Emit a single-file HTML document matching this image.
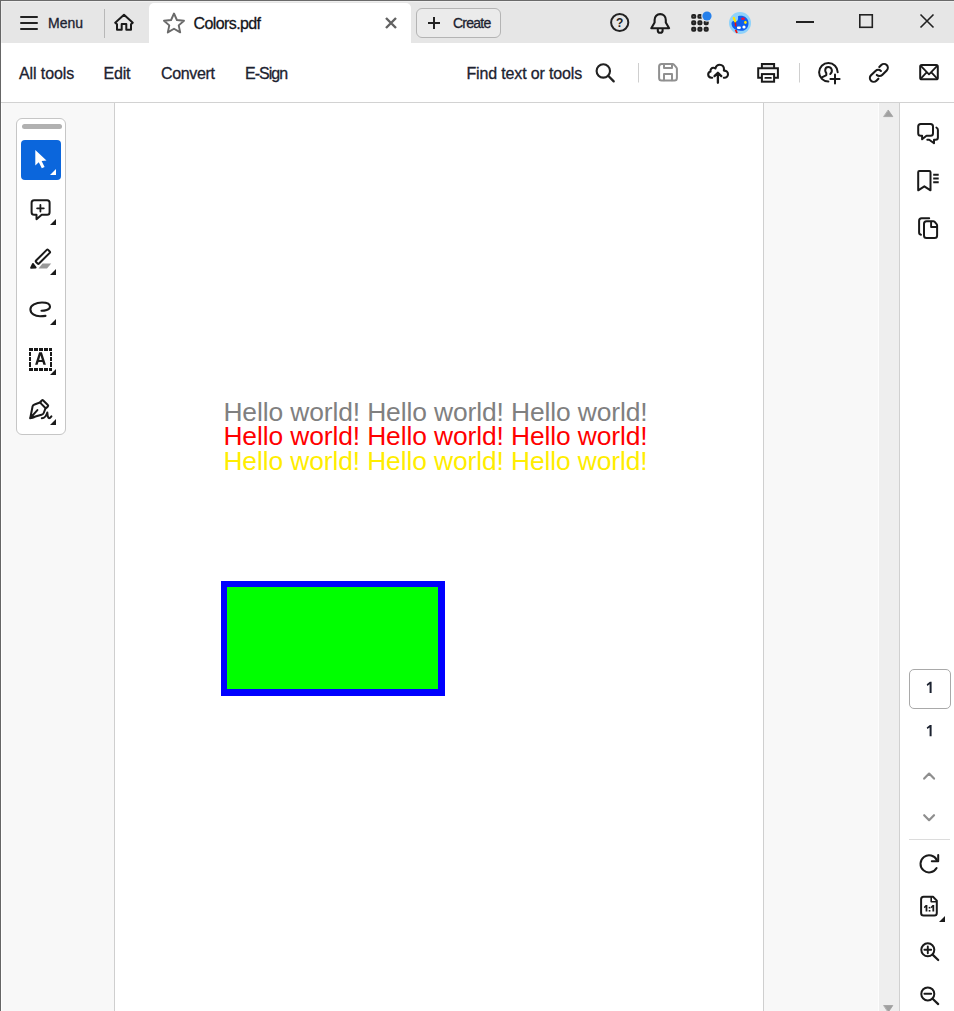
<!DOCTYPE html>
<html><head><meta charset="utf-8">
<style>
html,body{margin:0;padding:0;}
body{width:954px;height:1011px;position:relative;overflow:hidden;background:#fff;font-family:"Liberation Sans",sans-serif;color:#222;}
.abs{position:absolute;}
.t{position:absolute;white-space:nowrap;line-height:1;}
.u{-webkit-text-stroke:0.300px #1c2230;}
svg{position:absolute;overflow:visible;}
</style></head><body>
<!-- title bar -->
<div class="abs" style="left:0;top:0;width:954px;height:43px;background:#e6e6e6;"></div>
<div class="abs" style="left:0;top:0;width:954px;height:1px;background:#6a6a6a;"></div>
<div class="abs" style="left:0;top:0;width:1px;height:1011px;background:#666;z-index:50;"></div>
<div class="abs" style="left:1px;top:1px;width:953px;height:1px;background:#efefef;"></div>
<div class="abs" style="left:1px;top:1px;width:1px;height:42px;background:#ededed;"></div>
<!-- hamburger -->
<div class="abs" style="left:20px;top:16px;width:18px;height:2px;background:#222;border-radius:1px;"></div>
<div class="abs" style="left:20px;top:22px;width:18px;height:2px;background:#222;border-radius:1px;"></div>
<div class="abs" style="left:20px;top:28px;width:18px;height:2px;background:#222;border-radius:1px;"></div>
<div class="t u" id="menu" style="left:48px;top:15.5px;font-size:14px;color:#1c2230;">Menu</div>
<div class="abs" style="left:104px;top:9px;width:1px;height:29px;background:#b8b8b8;"></div>
<!-- home -->
<svg style="left:0;top:0" width="160" height="43" viewBox="0 0 160 43"><path d="M117 24.200 L115.200 22.700 L124 14.800 L132.800 22.700 L131 24.200 V29.800 H126.300 V24 H121.700 V29.800 H117 Z" fill="none" stroke="#1a1a1a" stroke-width="2" stroke-linejoin="round" stroke-linecap="round"/></svg>
<!-- tab -->
<div class="abs" style="left:149px;top:3px;width:262px;height:40px;background:#fff;border-radius:5px 5px 0 0;"></div>
<svg style="left:162px;top:11px" width="24" height="24" viewBox="0 0 24 24"><path d="M12 2.500 L14.900 9 L22 9.700 L16.700 14.400 L18.200 21.400 L12 17.800 L5.800 21.400 L7.300 14.400 L2 9.700 L9.100 9 Z" fill="none" stroke="#6a6a6a" stroke-width="1.900" stroke-linejoin="round"/></svg>
<div class="t u" id="tabt" style="left:193.500px;top:16px;font-size:16px;letter-spacing:-0.600px;color:#111;">Colors.pdf</div>
<svg style="left:385px;top:17px" width="12" height="12" viewBox="0 0 12 12"><path d="M1 1 L11 11 M11 1 L1 11" stroke="#626262" stroke-width="2.400" fill="none"/></svg>
<!-- create -->
<div class="abs" style="left:416px;top:8px;width:83px;height:28px;border:1px solid #b4b4b4;border-radius:6px;background:#ebebeb;"></div>
<svg style="left:428px;top:17px" width="12" height="12" viewBox="0 0 12 12"><path d="M6 0 V12 M0 6 H12" stroke="#222" stroke-width="2" fill="none"/></svg>
<div class="t u" id="create" style="left:453px;top:15.500px;font-size:14px;letter-spacing:-0.750px;color:#1c2230;">Create</div>
<!-- toolbar -->
<div class="abs" style="left:1px;top:43px;width:953px;height:59px;background:#fff;"></div>
<div class="abs" style="left:1px;top:102px;width:953px;height:1px;background:#d2d2d2;"></div>
<div class="t u" id="alltools" style="left:19px;top:66px;font-size:16px;letter-spacing:-0.100px;color:#1c2230;">All tools</div>
<div class="t u" id="edit" style="left:103.500px;top:66px;font-size:16px;letter-spacing:-0.200px;color:#1c2230;">Edit</div>
<div class="t u" id="convert" style="left:161px;top:66px;font-size:16px;letter-spacing:-0.350px;color:#1c2230;">Convert</div>
<div class="t u" id="esign" style="left:245px;top:66px;font-size:16px;letter-spacing:-1px;color:#1c2230;">E-Sign</div>
<div class="t u" id="find" style="left:466.500px;top:66px;font-size:16px;letter-spacing:-0.150px;color:#1c2230;">Find text or tools</div>
<!-- body -->
<div class="abs" style="left:2px;top:103px;width:112px;height:908px;background:#f8f8f8;"></div>
<div class="abs" style="left:114px;top:103px;width:1px;height:908px;background:#cfcfcf;"></div>
<div class="abs" style="left:763px;top:103px;width:1px;height:908px;background:#cfcfcf;"></div>
<div class="abs" style="left:764px;top:103px;width:114px;height:908px;background:#f8f8f8;"></div><div class="abs" style="left:878px;top:103px;width:1px;height:908px;background:#fdfdfd;"></div>
<div class="abs" style="left:879px;top:103px;width:20px;height:908px;background:#eeeeee;"></div>
<div class="abs" style="left:899px;top:103px;width:1px;height:908px;background:#d0d0d0;"></div>
<!-- toolbox -->
<div class="abs" style="left:16px;top:118px;width:48px;height:315px;border:1px solid #c6c6c6;border-radius:6px;background:#fff;"></div>
<div class="abs" style="left:22px;top:124px;width:40px;height:5px;border-radius:2.500px;background:#b1b1b1;"></div>
<div class="abs" style="left:21px;top:140px;width:40px;height:40px;border-radius:4px;background:#0b66dc;"></div>
<!-- document content -->
<div class="t" id="l1" style="left:223.400px;top:398.650px;font-size:26.400px;letter-spacing:-0.110px;color:#808080;">Hello world! Hello world! Hello world!</div>
<div class="t" id="l2" style="left:223.400px;top:422.550px;font-size:26.400px;letter-spacing:-0.110px;color:#ff0000;">Hello world! Hello world! Hello world!</div>
<div class="t" id="l3" style="left:223.400px;top:447.500px;font-size:26.400px;letter-spacing:-0.110px;color:#ffed00;">Hello world! Hello world! Hello world!</div>
<div class="abs" style="left:221px;top:581px;width:224px;height:115px;background:#0000ff;"></div><div class="abs" style="left:227px;top:587px;width:211px;height:102px;background:#00ff00;"></div>
<!-- page nav -->
<div class="abs" style="left:909px;top:669px;width:40px;height:38px;border:1px solid #a9a9a9;border-radius:5px;background:#fff;"></div>
<div class="abs" style="left:909px;top:839px;width:41px;height:1px;background:#dcdcdc;"></div>

<!-- ICONS overlay -->
<svg id="ico" style="left:0;top:0" width="954" height="1011" viewBox="0 0 954 1011" fill="none" stroke-linecap="round" stroke-linejoin="round">
<!-- help -->
<g stroke="#222" stroke-width="2">
<circle cx="619.7" cy="22.5" r="8.600"/>
</g>
<text x="619.700" y="27" font-family="Liberation Sans, sans-serif" font-weight="bold" font-size="12" text-anchor="middle" fill="#222">?</text>
<!-- bell -->
<g stroke="#1a1a1a" stroke-width="2.100">
<path d="M651.300 28.200 L654.600 22.500 V20 C654.600 16.500 657 14.100 660.200 14.100 C663.400 14.100 665.800 16.500 665.800 20 V22.500 L669.100 28.200 Z"/>
<path d="M657.800 29.500 V30.400 A2.400 2.400 0 0 0 662.600 30.400 V29.500"/>
</g>
<!-- apps -->
<g stroke="#222" stroke-width="1.900" fill="#555"><rect x="692.1" y="15.0" width="3.200" height="2.900" rx="0.900"/><rect x="698.3" y="15.0" width="3.200" height="2.900" rx="0.900"/><rect x="692.1" y="21.3" width="3.200" height="2.900" rx="0.900"/><rect x="698.3" y="21.3" width="3.200" height="2.900" rx="0.900"/><rect x="704.6" y="21.3" width="3.200" height="2.900" rx="0.900"/><rect x="692.1" y="27.8" width="3.200" height="2.900" rx="0.900"/><rect x="698.3" y="27.8" width="3.200" height="2.900" rx="0.900"/><rect x="704.6" y="27.8" width="3.200" height="2.900" rx="0.900"/></g>
<circle cx="707" cy="16" r="5.800" fill="#e6e6e6"/>
<circle cx="707" cy="16" r="4.600" fill="#2680eb"/>
<!-- avatar -->
<circle cx="740" cy="23" r="11" fill="#8fd2fa"/>
<path d="M738 16.200 C743 14.800 748.500 17.500 748.500 23 C748.500 29 744 31.300 740.500 30.800 C736 30.500 732 28.500 731.500 24 C731.300 21.500 733 20.500 734.500 21 C737.500 22 738.500 20 738 16.200 Z" fill="#0e5eee"/>
<ellipse cx="743" cy="18.700" rx="1.900" ry="1.200" fill="#f0103c"/>
<ellipse cx="745.400" cy="22.300" rx="1.300" ry="1.600" fill="#ffe600"/>
<circle cx="744" cy="27" r="1.600" fill="#fff"/>
<rect x="737" y="26.500" width="3.800" height="2.400" rx="0.800" fill="#fff"/>
<path d="M733.800 18 L735.300 21.500" stroke="#ffe600" stroke-width="2.200"/>
<path d="M735.300 22.500 L735.800 26.500" stroke="#e81010" stroke-width="1.600" stroke-linecap="butt"/>
<path d="M735.600 29.800 L737 33" stroke="#e81010" stroke-width="1.800" stroke-linecap="butt"/>
<!-- window controls -->
<g stroke="#222" stroke-linecap="butt" stroke-linejoin="miter">
<path d="M796 22 H814" stroke-width="2"/>
<rect x="859.800" y="14.800" width="12.500" height="12.500" stroke-width="1.600"/>
<path d="M920.500 14.500 L933.500 27.500 M933.500 14.500 L920.500 27.500" stroke-width="1.600"/>
</g>
<!-- search -->
<g stroke="#222" stroke-width="2.100">
<circle cx="603.300" cy="70.900" r="6.700"/>
<path d="M608.200 75.800 L613.700 81.400" stroke-width="2.300"/>
</g>
<path d="M638.500 63 V82.500" stroke="#cfcfcf" stroke-width="1" stroke-linecap="butt"/>
<path d="M799.500 63 V82.500" stroke="#cfcfcf" stroke-width="1" stroke-linecap="butt"/>
<!-- save -->
<g stroke="#909090" stroke-width="2">
<path d="M661.600 64.100 H672.600 Q673.400 64.100 674 64.700 L676.300 67.300 Q676.900 68 676.900 68.800 V78.100 Q676.900 80.600 674.400 80.600 H661.600 Q659.100 80.600 659.100 78.100 V66.600 Q659.100 64.100 661.600 64.100 Z"/>
<path d="M664 64.500 V68 H672 V64.500"/>
<path d="M664 80.300 V74 H672 V80.300"/>
</g>
<!-- cloud upload -->
<g stroke="#1a1a1a" stroke-width="2.100">
<path d="M712.200 77.700 H711.600 C709.600 77.700 708.200 76.400 708.200 74.600 C708.200 73.100 709.200 72 710.500 71.600 C710.200 69.400 711.600 67.800 713.400 67.800 C714.200 67.800 714.900 68.100 715.400 68.500 C715.900 66.300 717.500 64.700 719.700 64.700 C722.300 64.700 724 66.700 724 69.300 C724 69.800 723.950 70.200 723.850 70.600 C726.200 70.500 728 72.100 728 74.200 C728 76.200 726.400 77.700 724.400 77.700 H723.800"/>
<path d="M717.900 82.800 V73 M714.500 76.100 L717.900 72.700 L721.300 76.100" stroke-width="2.300"/>
</g>
<!-- print -->
<rect x="762.500" y="65" width="11" height="2.500" fill="#dcdcdc"/>
<g stroke="#1a1a1a" stroke-width="2" stroke-linejoin="miter" stroke-linecap="butt">
<path d="M761.900 77.750 H758.200 V68.200 H777.900 V77.750 H774.100"/>
<path d="M761.900 68 V64.100 H774.100 V68"/>
<rect x="761.900" y="74.100" width="12.200" height="7.600" fill="#fff"/>
<path d="M765.300 77.900 H770.900" stroke-width="1.800" stroke-linecap="round"/>
</g>
<!-- share -->
<g stroke="#1a1a1a" stroke-width="2">
<path d="M837.700 72.300 A9.300 9.300 0 1 0 828.400 81.600"/>
<path d="M830.300 74 C832 72.500 832 70.500 831.700 69.500 C831 67.600 829.600 67 828.400 67 C826.500 67 825.200 68.500 825.200 70.300 C825.200 71.500 825.800 72.500 826.300 73.200 V75 C826 75.700 824 76.200 821.700 77.600"/>
<path d="M835 74.500 V83.600 M830.400 79 H839.600"/>
</g>
<!-- link -->
<g stroke="#1a1a1a" stroke-width="2.100">
<path d="M878.400 78.700 L876.400 80.700 A3.800 3.800 0 0 1 871 75.300 L875.500 70.900 A3.800 3.800 0 0 1 880.900 70.900"/>
<path d="M879.300 67.100 L881.300 65.100 A3.800 3.800 0 0 1 886.700 70.500 L882.200 74.900 A3.800 3.800 0 0 1 876.800 74.900"/>
</g>
<!-- mail -->
<g stroke="#1a1a1a" stroke-width="2">
<rect x="920.200" y="65" width="17.600" height="14.300" rx="1.600"/>
<path d="M920.800 65.800 L929 74.300 L937.200 65.800 M920.800 78.600 L926.600 72.300 M937.200 78.600 L931.400 72.300" stroke-width="1.800"/>
</g>
<!-- cursor -->
<path d="M35.300 150 V165.400 L38.800 162.300 L41.800 168.300 L44.600 167 L41.600 161 L46.500 160.600 Z" fill="#fff"/>
<path d="M56 169 V175 H50 Z" fill="#fff"/>
<!-- comment -->
<g stroke="#1a1a1a" stroke-width="2">
<path d="M34.100 200.300 H47.100 Q49.600 200.300 49.600 202.800 V212.200 Q49.600 214.700 47.100 214.700 H41.700 L36.500 219.200 V214.700 H34.100 Q31.600 214.700 31.600 212.200 V202.800 Q31.600 200.300 34.100 200.300 Z"/>
<path d="M40.400 204.900 V211.500 M37.100 208.300 H43.800" stroke-width="1.800"/>
</g>
<path d="M56 219 V225 H50 Z" fill="#1a1a1a"/>
<!-- highlighter -->
<rect x="-8.550" y="-2.100" width="17.100" height="4.200" rx="1" transform="translate(42.900 256.700) rotate(-45)" stroke="#1a1a1a" stroke-width="2"/>
<path d="M31 267.800 L32.900 263.900 L35.700 267.500 Z" fill="#1a1a1a" stroke="#1a1a1a" stroke-width="1.800"/>
<path d="M42.500 263.600 H51.200 L47 268.500 H38.500 Z" fill="#999"/>
<path d="M56 269 V275 H50 Z" fill="#1a1a1a"/>
<!-- lasso -->
<path d="M41.500 310.800 C44 310.800 50 309.800 50 306.700 C50 303.500 45.500 302.500 42 302.500 C36 302.500 30.400 305.200 30.400 309.300 C30.400 313.800 35 316.200 40 316.200 C42 316.200 44 316.100 45.500 315.900" stroke="#1a1a1a" stroke-width="2.100"/>
<path d="M56 319 V325 H50 Z" fill="#1a1a1a"/>
<!-- textbox -->
<g fill="#1a1a1a"><rect x="29" y="348" width="4" height="3"/><rect x="34" y="348" width="4" height="3"/><rect x="39" y="348" width="4" height="3"/><rect x="44" y="348" width="4" height="3"/><rect x="49" y="348" width="3" height="3"/><rect x="29" y="368" width="4" height="3"/><rect x="34" y="368" width="4" height="3"/><rect x="39" y="368" width="4" height="3"/><rect x="44" y="368" width="4" height="3"/><rect x="49" y="368" width="3" height="3"/><rect x="29" y="352" width="2" height="4"/><rect x="29" y="357" width="2" height="4"/><rect x="29" y="362" width="2" height="5"/><rect x="50" y="352" width="2" height="4"/><rect x="50" y="357" width="2" height="4"/><rect x="50" y="362" width="2" height="5"/></g>
<path d="M35.100 364.800 L39.100 352.300 H41.900 L45.900 364.800 H43.400 L42.500 361.900 H38.500 L37.600 364.800 Z M39.150 359.900 H41.850 L40.500 355.300 Z" fill="#1a1a1a" fill-rule="evenodd"/>
<path d="M56 369 V375 H50 Z" fill="#1a1a1a"/>
<!-- pen -->
<g stroke="#1a1a1a" stroke-width="2">
<path d="M30.300 418 L32.600 406.300 C32.900 405.200 33.500 404.800 34.500 404.500 L40.600 402.200 M45.500 408.300 L43.700 413 C43.300 414 42.500 414.400 41.500 414.700 L30.300 418"/>
<rect x="-4.250" y="-1.900" width="8.500" height="3.800" rx="1" transform="translate(44.200 404.100) rotate(45)"/>
<path d="M31 417.200 L37.400 410.100"/>
<path d="M29.900 418.500 L31.300 413.800 L34.600 417.300 Z" fill="#1a1a1a" stroke-width="1"/>
<path d="M41.800 418.200 C44.500 418 46.500 415.500 47.300 412.400 C47.500 414.500 47.500 417 48.600 418 C49.500 418.500 50.500 417.500 51.400 416.300"/>
</g>
<path d="M56 419 V425 H50 Z" fill="#1a1a1a"/>
<!-- scroll arrows -->
<path d="M888.400 110.300 L892.800 116.600 H884 Z" fill="#a0a0a0" stroke="#a0a0a0" stroke-width="0.800"/>
<path d="M884 1005.500 H892.800 L888.400 1012 Z" fill="#a0a0a0" stroke="#a0a0a0" stroke-width="0.800"/>
<!-- right: comments -->
<g stroke="#1a1a1a" stroke-width="2">
<path d="M920.700 124 H930.500 Q933 124 933 126.500 V133.250 Q933 135.750 930.500 135.750 H926.500 L922.100 139.300 V135.750 H920.700 Q918.200 135.750 918.200 133.250 V126.500 Q918.200 124 920.700 124 Z"/>
<path d="M936.400 127.600 Q937.900 128.100 937.900 130 V137.500 Q937.900 139.800 935.600 139.800 H934 V143.300 L929.200 139.800 H927.300"/>
</g>
<!-- bookmark -->
<path d="M919.400 171.100 H929.300 Q930.500 171.100 930.500 172.300 V190.300 L924.350 186.300 L918.200 190.300 V172.300 Q918.200 171.100 919.400 171.100 Z" stroke="#1a1a1a" stroke-width="2"/>
<path d="M933.200 174.800 H938.700 M933.200 178.500 H938.700 M933.200 182.200 H938.700" stroke="#1a1a1a" stroke-width="1.900" stroke-linecap="butt"/>
<!-- pages -->
<g stroke="#1a1a1a" stroke-width="2">
<path d="M926.500 221.200 H933.300 Q934 221.200 934.500 221.700 L936.600 224.200 Q937.100 224.800 937.100 225.500 V235.400 Q937.100 237.900 934.600 237.900 H926.500 Q924 237.900 924 235.400 V223.700 Q924 221.200 926.500 221.200 Z"/>
<path d="M931.100 221.800 V227 H936.700" stroke-width="1.900"/>
<path d="M929.200 218.200 H921.600 Q919.100 218.200 919.100 220.700 V232.500 Q919.100 234.400 921 234.800"/>
</g>
<!-- page nums -->
<path d="M926.700 684.300 L929.900 681.800 H931.600 V693.100 H929.600 V684.300 L927.400 685.900 Z" fill="#1c2230"/>
<path d="M926.700 727.500 L929.900 725 H931.600 V736.300 H929.600 V727.500 L927.400 729.100 Z" fill="#1c2230"/>
<!-- chevrons -->
<path d="M924.200 778.600 L929.100 773.600 L934 778.600" stroke="#8e8e8e" stroke-width="2.200"/>
<path d="M924.200 815.200 L929.100 820.200 L934 815.200" stroke="#8e8e8e" stroke-width="2.200"/>
<!-- rotate -->
<g stroke="#1a1a1a" stroke-width="2">
<path d="M936.900 860.200 A8.600 8.600 0 1 0 936.600 868.100"/>
<path d="M931.800 861.200 H938.200 V855"/>
</g>
<!-- fit page -->
<g stroke="#1a1a1a" stroke-width="2">
<path d="M923.600 896.800 H933 L936.800 900.600 V913.100 Q936.800 915.600 934.300 915.600 H923.600 Q921.100 915.600 921.100 913.100 V899.300 Q921.100 896.800 923.600 896.800 Z"/>
<path d="M931.200 897.300 V901.800 H936.300" stroke-width="1.600"/>
</g>
<g fill="#1a1a1a"><path d="M923.800 906.900 L925.700 905 H927.400 V911.600 H925.600 V907.300 L924.500 908.200 Z"/><rect x="928.700" y="906.900" width="1.700" height="1.600"/><rect x="928.700" y="910" width="1.700" height="1.600"/><path d="M930.700 906.900 L932.500 905 H934.200 V911.600 H932.400 V907.300 L931.400 908.200 Z"/></g>
<path d="M945 916 V922 H939 Z" fill="#1a1a1a"/>
<!-- zoom in/out -->
<g stroke="#1a1a1a" stroke-width="2">
<circle cx="927.800" cy="949.800" r="6.500"/>
<path d="M932.600 954.600 L938.200 960" stroke-width="2.200"/>
<path d="M924.400 949.800 H931.200 M927.800 946.500 V953.200" stroke-width="1.900"/>
<circle cx="927.800" cy="993.900" r="6.500"/>
<path d="M932.600 998.700 L938.200 1004.100" stroke-width="2.200"/>
<path d="M924.400 993.700 H931.200" stroke-width="1.900"/>
</g>
</svg>
</body></html>
